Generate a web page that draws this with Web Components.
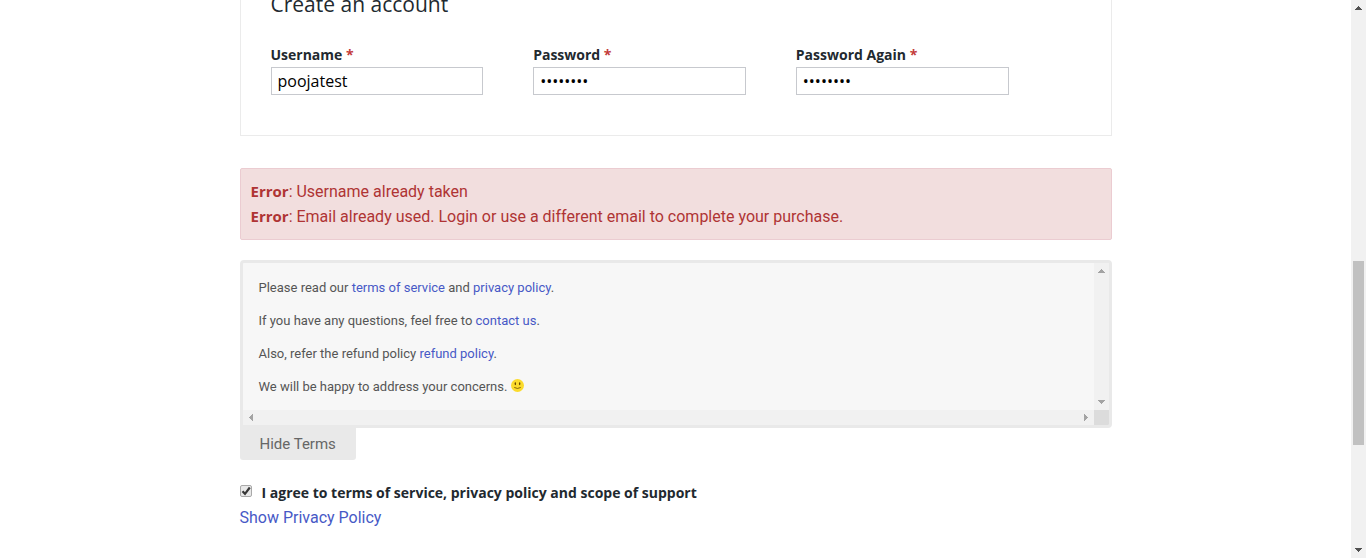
<!DOCTYPE html>
<html lang="en">
<head>
<meta charset="utf-8">
<title>Checkout</title>
<style>
html, body { margin: 0; }
body {
  --ink: #22292f;
  --link: #4759c6;
  --line: #ebebeb;
  --strong: "Open Sans", "Noto Sans", sans-serif;
  background: #fff;
  color: var(--ink);
  font: 16px/25px Roboto, "Noto Sans", sans-serif;
}
</style>
</head>
<body>
<checkout-page>
  <account-card heading="Create an account">
    <form-field label="Username" type="text" value="poojatest"></form-field>
    <form-field label="Password" type="password" value="password"></form-field>
    <form-field label="Password Again" type="password" value="password"></form-field>
  </account-card>
  <error-notice>
    <error-line>Username already taken</error-line>
    <error-line>Email already used. Login or use a different email to complete your purchase.</error-line>
  </error-notice>
  <terms-box></terms-box>
  <terms-agreement>I agree to terms of service, privacy policy and scope of support</terms-agreement>
</checkout-page>

<script>
function define(name, html, setup) {
  const template = document.createElement('template');
  template.innerHTML = html;
  customElements.define(name, class extends HTMLElement {
    constructor() {
      super();
      this.attachShadow({ mode: 'open' }).append(template.content.cloneNode(true));
    }
    connectedCallback() {
      if (setup) setup(this, this.shadowRoot);
    }
  });
}

define('scroll-arrow', `
  <style>
    :host { display: flex; width: 15px; height: 15px; flex: none; color: #a3a3a3; }
    svg { width: 15px; height: 15px; fill: currentColor; }
    :host([to="down"]) svg { transform: rotate(180deg); }
    :host([to="left"]) svg { transform: rotate(270deg); }
    :host([to="right"]) svg { transform: rotate(90deg); }
  </style>
  <svg viewBox="0 0 15 15" shape-rendering="crispEdges" aria-hidden="true"><path d="M7 6h1v1h1v1h1v1h1v1H4V9h1V8h1V7h1z"/></svg>
`);

define('page-scrollbar', `
  <style>
    :host { display: flex; flex-direction: column; width: 15px; flex: none; background: #f1f1f1; }
    scroll-arrow { color: #505050; }
    .track { flex: 1; display: flex; flex-direction: column; padding: 0 2px; }
    .before { flex: 246; }
    .thumb { flex: 184; background: #c1c1c1; }
    .after { flex: 98; }
  </style>
  <scroll-arrow to="up"></scroll-arrow>
  <div class="track"><div class="before"></div><div class="thumb"></div><div class="after"></div></div>
  <scroll-arrow to="down"></scroll-arrow>
`);

define('checkout-page', `
  <style>
    :host { display: flex; height: 100vh; overflow: hidden; }
    main { flex: 1; min-width: 0; overflow: hidden; }
    .column { max-width: 872px; margin: 0 auto; }
  </style>
  <main><div class="column"><slot></slot></div></main>
  <page-scrollbar></page-scrollbar>
`);

define('account-card', `
  <style>
    :host { display: block; box-sizing: border-box; padding: 0 30px 40px; margin-top: -10px; margin-bottom: 32px;
            border: 1px solid var(--line); border-top: 0; }
    h2 { margin: 0 0 24px; font: 21px/28px var(--strong); }
    .fields { display: grid; grid-template-columns: repeat(3, minmax(0, 1fr)); gap: 50px; padding-right: 72px; }
  </style>
  <h2></h2>
  <div class="fields"><slot></slot></div>
`, (host, root) => {
  root.querySelector('h2').textContent = host.getAttribute('heading');
});

define('form-field', `
  <style>
    :host { display: block; }
    label { display: block; font: bold 14px/25px var(--strong); }
    .required { color: #c33b3b; }
    input { display: block; box-sizing: border-box; width: 100%; height: 28px; margin: 0; padding: 0 6px;
            border: 1px solid #c7c9ce; border-radius: 0; background: #fff; color: #000;
            font: 16px/24px var(--strong); outline: 0; }
  </style>
  <label for="field"><span class="name"></span> <span class="required">*</span></label>
  <input id="field">
`, (host, root) => {
  root.querySelector('.name').textContent = host.getAttribute('label');
  const input = root.querySelector('input');
  input.type = host.getAttribute('type');
  input.value = host.getAttribute('value');
});

define('error-notice', `
  <style>
    :host { display: block; padding: 10px; margin-bottom: 20px; border: 1px solid #ebccd1; border-radius: 2px;
            background: #f2dede; color: #af3434; }
  </style>
  <slot></slot>
`);

define('error-line', `
  <style>
    :host { display: block; }
    strong { font: bold 15px/24px var(--strong); }
  </style>
  <strong>Error</strong>: <slot></slot>
`);

define('smile-icon', `
  <style>
    :host { display: inline-block; width: 13px; height: 13px; vertical-align: -1px; }
    svg { display: block; width: 13px; height: 13px; }
  </style>
  <svg viewBox="0 0 36 36" role="img" aria-label="Smile">
    <circle cx="18" cy="18" r="18" fill="#fbdb2c"/>
    <ellipse cx="12" cy="13" rx="2" ry="4" fill="#664500"/>
    <ellipse cx="24" cy="13" rx="2" ry="4" fill="#664500"/>
    <path d="M10 24q8 5 16 0" fill="none" stroke="#664500" stroke-width="2.2" stroke-linecap="round"/>
  </svg>
`);

define('terms-box', `
  <style>
    :host { display: block; margin-bottom: 20px; }
    .frame { display: grid; grid-template-columns: minmax(0, 1fr) 15px; border: 3px solid #e9e9e9;
             border-radius: 4px 4px 4px 0; overflow: hidden; background: #f7f7f7; }
    .text { padding: 15px 16px 13px; color: #555; font-size: 13px; line-height: 20px; }
    p { margin: 0 0 13px; }
    p:last-child { margin: 0; }
    a { color: var(--link); text-decoration: none; }
    .bar { display: flex; justify-content: space-between; background: #f1f1f1; }
    .vertical { flex-direction: column; }
    .corner { background: #dcdcdc; }
    button { display: block; height: 32px; margin: 0; padding: 0 20px; border: 0; border-radius: 0 0 3px 3px;
             background: #e9e9e9; color: #666; font: inherit; font-size: 15px; }
  </style>
  <div class="frame">
    <div class="text">
      <p>Please read our <a href="#terms">terms of service</a> and <a href="#privacy">privacy policy</a>.</p>
      <p>If you have any questions, feel free to <a href="#contact">contact us</a>.</p>
      <p>Also, refer the refund policy <a href="#refund">refund policy</a>.</p>
      <p>We will be happy to address your concerns. <smile-icon></smile-icon></p>
    </div>
    <div class="bar vertical"><scroll-arrow to="up"></scroll-arrow><scroll-arrow to="down"></scroll-arrow></div>
    <div class="bar"><scroll-arrow to="left"></scroll-arrow><scroll-arrow to="right"></scroll-arrow></div>
    <div class="corner"></div>
  </div>
  <button type="button">Hide Terms</button>
`);

define('terms-agreement', `
  <style>
    :host { display: block; }
    .row { display: flex; align-items: center; gap: 10px; }
    label { font: bold 14px/25px var(--strong); }
    input { appearance: none; box-sizing: border-box; width: 12px; height: 12px; margin: 0 0 3px; flex: none;
            border: 1px solid #a9a9a9; border-radius: 2px;
            background: url("data:image/svg+xml,%3Csvg xmlns='http://www.w3.org/2000/svg' viewBox='0 0 10 10'%3E%3Cpath d='M1.5 5.2L4 7.8L8.8 1.5' fill='none' stroke='%23383838' stroke-width='2.2'/%3E%3C/svg%3E") center / 10px 10px no-repeat #e8e8e8; }
    a { color: var(--link); text-decoration: none; }
  </style>
  <div class="row">
    <input type="checkbox" id="agree" checked>
    <label for="agree"><slot></slot></label>
  </div>
  <a href="#privacy">Show Privacy Policy</a>
`);
</script>
</body>
</html>
